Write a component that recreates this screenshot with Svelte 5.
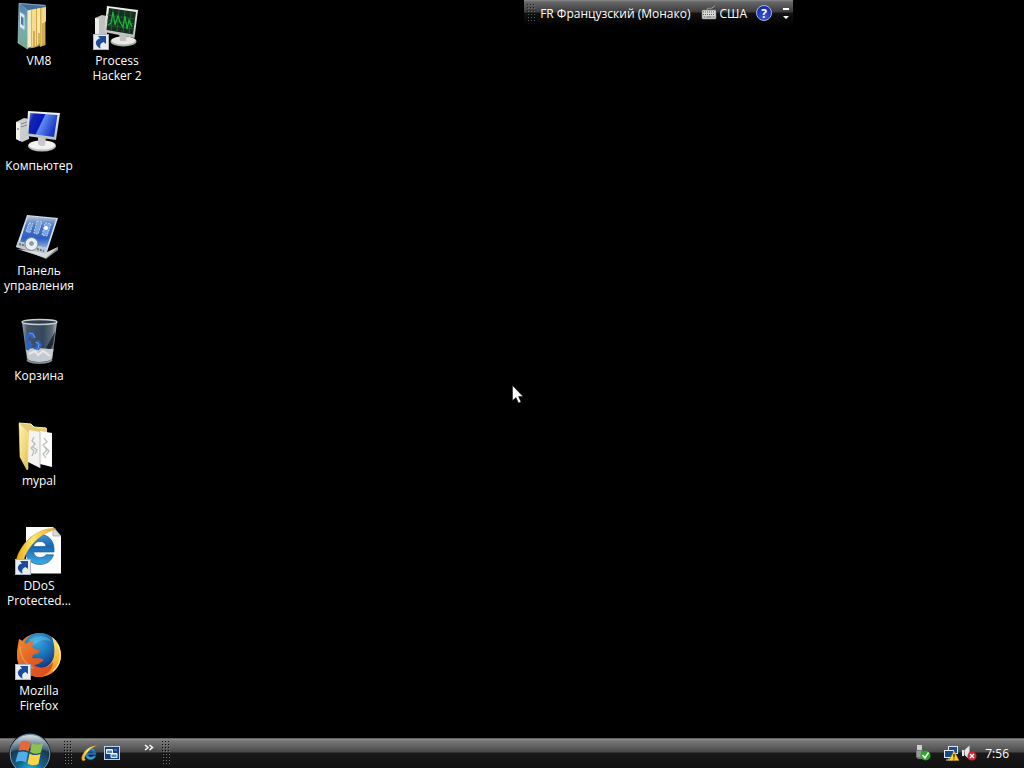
<script>
  const shortcuts = [
    { icon: 'binder', label: 'VM8' },
    { icon: 'computer', label: 'Компьютер' },
    { icon: 'control', label: 'Панель управления' },
    { icon: 'bin', label: 'Корзина' },
    { icon: 'folder', label: 'mypal' },
    { icon: 'page', label: 'DDoS Protected...', link: true },
    { icon: 'firefox', label: 'Mozilla Firefox', link: true },
    { icon: 'hacker', label: 'Process Hacker 2', link: true }
  ];
</script>

<svg class="defs" aria-hidden="true">
  <defs>
    <linearGradient id="g-screen" x1="0" y1="0" x2="1" y2=".4">
      <stop offset="0" stop-color="#6f95ec" /><stop offset=".2" stop-color="#1226b4" /><stop offset=".5" stop-color="#0718b8" /><stop offset=".54" stop-color="#5c8cf0" /><stop offset="1" stop-color="#1a35c8" />
    </linearGradient>
    <linearGradient id="g-metal" x1="0" y1="0" x2="0" y2="1">
      <stop offset="0" stop-color="#f4f4f2" /><stop offset="1" stop-color="#b9bdbb" />
    </linearGradient>
    <linearGradient id="g-binder" x1="0" y1="0" x2="0" y2="1">
      <stop offset="0" stop-color="#4d7fb0" /><stop offset=".5" stop-color="#78adb8" /><stop offset="1" stop-color="#72aa8a" />
    </linearGradient>
    <linearGradient id="g-panel" x1="0" y1="0" x2="0" y2="1">
      <stop offset="0" stop-color="#b9c6dc" /><stop offset=".3" stop-color="#4f78c0" /><stop offset=".7" stop-color="#2c5fc0" /><stop offset="1" stop-color="#8eb0e6" />
    </linearGradient>
    <linearGradient id="g-glass" x1="0" y1="0" x2="1" y2="0">
      <stop offset="0" stop-color="#9ca8b2" /><stop offset=".15" stop-color="#43566a" /><stop offset=".6" stop-color="#34465a" /><stop offset=".86" stop-color="#5d6b77" /><stop offset="1" stop-color="#b3babf" />
    </linearGradient>
    <linearGradient id="g-flap" x1="0" y1="0" x2="1" y2="1">
      <stop offset="0" stop-color="#fff4b4" /><stop offset=".6" stop-color="#f0d878" /><stop offset="1" stop-color="#d9b850" />
    </linearGradient>
    <linearGradient id="g-ie" x1="0" y1="0" x2="0" y2="1">
      <stop offset="0" stop-color="#3d94d6" /><stop offset=".4" stop-color="#1766b0" /><stop offset="1" stop-color="#3aaee8" />
    </linearGradient>
    <linearGradient id="g-ring" x1="0" y1="0" x2="1" y2="0">
      <stop offset="0" stop-color="#e2a818" /><stop offset=".4" stop-color="#ffe768" /><stop offset="1" stop-color="#e9a52c" />
    </linearGradient>
    <linearGradient id="g-fox" x1="0" y1="0" x2="1" y2="1">
      <stop offset="0" stop-color="#f08a34" /><stop offset=".5" stop-color="#e05e22" /><stop offset="1" stop-color="#d9481c" />
    </linearGradient>
    <linearGradient id="g-tail" x1="0" y1="0" x2="0" y2="1">
      <stop offset="0" stop-color="#ffe874" /><stop offset=".6" stop-color="#fbb433" /><stop offset="1" stop-color="#ee7d22" />
    </linearGradient>
    <radialGradient id="g-globe" cx=".4" cy=".25" r=".75">
      <stop offset="0" stop-color="#3aa9de" /><stop offset=".55" stop-color="#1a72b8" /><stop offset="1" stop-color="#123a84" />
    </radialGradient>
    <radialGradient id="g-orb" cx=".5" cy=".95" r=".85">
      <stop offset="0" stop-color="#25c6e8" /><stop offset=".4" stop-color="#14628c" /><stop offset=".8" stop-color="#18354c" /><stop offset="1" stop-color="#51697a" />
    </radialGradient>
    <linearGradient id="g-shine" x1="0" y1="0" x2="0" y2="1">
      <stop offset="0" stop-color="#e4edf2" stop-opacity=".9" /><stop offset="1" stop-color="#8ba4b2" stop-opacity=".25" />
    </linearGradient>
    <pattern id="p-grip" width="3" height="3" patternUnits="userSpaceOnUse">
      <rect width="1" height="1" fill="#080808" /><rect x="1" y="1" width="1" height="1" fill="#777" />
    </pattern>
  </defs>
</svg>

{#snippet explorer()}
  <path fill="url(#g-ie)" stroke="#0f4f92" stroke-width=".6" fill-rule="evenodd" d="M39 24H18.500C19 27.500 21.500 29.500 25 29.500C28 29.500 29.800 28.500 31 26.800H38.500C36.500 33 31.500 36.500 25 36.500C16.500 36.500 10 30.500 10 21.500C10 13 16.500 6.500 25 6.500C34 6.500 40 13.500 39 24ZM18.500 18.500H31C30.500 15 28.500 13.500 25 13.500C21.500 13.500 19.200 15 18.500 18.500Z" />
  <path fill="url(#g-ring)" stroke="#c88f18" stroke-width=".4" d="M41 1C31 -1 19 5 10 15C3 24 -1 33 3 38C5 40.500 9 39 12 36.500C9 36 8 32 11 26C15 18 23 9 32 4.500C36 3 38 2 41 1Z" />
{/snippet}

<main class="desktop">
  <section class="langbar" aria-label="Языковая панель">
    <svg class="lang-grip" viewBox="0 0 9 18" aria-hidden="true"><rect width="9" height="18" fill="url(#p-grip)" opacity=".7" /></svg>
    <button class="language">FR Французский (Монако)</button>
    <button class="layout">
      <svg class="keyboard" viewBox="0 0 16 16" aria-hidden="true">
        <path d="M6 5C6 2 9 4 11 3S13 1 14 1" fill="none" stroke="#aaa" />
        <rect x="1" y="5" width="14" height="9" rx="1" fill="#dcdcdc" stroke="#777" stroke-width=".6" />
        <path d="M2 7h12M2 9.500h12" stroke="#555" stroke-dasharray="1 1" /><path d="M2.500 12h2M5.500 12h5M11.500 12h2" stroke="#555" />
      </svg>
      <span>США</span>
    </button>
    <button class="help" aria-label="Справка">?</button>
    <button class="options" aria-label="Параметры">
      <svg viewBox="0 0 8 12" aria-hidden="true"><path d="M1 0h6v2H1zM1 8h6l-3 3z" fill="#fff" /></svg>
    </button>
  </section>

  <nav class="icons" aria-label="Рабочий стол">
    {#each shortcuts as item}
      <button class="shortcut">
        <svg class="picture" viewBox="0 0 48 48" aria-hidden="true">
          {#if item.icon === 'binder'}
            <path d="M4 0L31 2V42L12 46Z" fill="#39566f" />
            <path d="M12 8L16 6V44L12 45Z" fill="#f4ecc0" />
            <path d="M16 6L21 5V44L16 45Z" fill="#d8b75a" /><path d="M17 7L21 5.500V42L17 44Z" fill="#f6dc8e" />
            <path d="M21 4L25 3V42L21 44Z" fill="#cda546" /><path d="M22 5L25 4V40L22 42Z" fill="#fbe7a2" />
            <path d="M25 3L30 2V42L25 44Z" fill="#d7b14f" /><path d="M26.500 5L31 3V18L29 20V40L26.500 42Z" fill="#f5d987" />
            <path d="M19 28V45M24 30V43M28 20V42" stroke="#a47e2d" />
            <path d="M4 0L12.500 7V46L3 40Z" fill="url(#g-binder)" stroke="#b6d3d8" stroke-width=".6" />
            <path d="M4 0L31 2L31 4L13 7Z" fill="#416d96" /><path d="M4 .5L30 2.500" stroke="#91b3c8" stroke-width=".8" />
            <path d="M5 9L9.500 12V27L5 24Z" fill="#dce9ee" /><path d="M6 13L8.500 15V23L6 21Z" fill="#477db2" />
          {:else if item.icon === 'computer'}
            <path d="M1 14L9 10L14 11V31L7 34L1 31Z" fill="#cbcecc" /><path d="M1 14L5 15V33L1 31Z" fill="#f2f2ef" />
            <path d="M6 16L12 14M6 19L12 17" stroke="#888" /><circle cx="3" cy="21" r="1" fill="#8a918b" />
            <ellipse cx="27" cy="38" rx="14" ry="5.500" fill="#b9bdba" /><ellipse cx="27" cy="37" rx="13" ry="4.500" fill="#f2f2f0" />
            <path d="M23 29H31L30 37C28 39 24 38 23 36Z" fill="#c7cac8" />
            <path d="M13 3L45 5L41 32L11.500 28Z" fill="url(#g-metal)" /><path d="M15 5L42.500 7L39 29L13.500 25.500Z" fill="url(#g-screen)" />
          {:else if item.icon === 'control'}
            <path d="M1 34L31 41L43 34V37L31 46Z" fill="#898e90" /><path d="M30 40L43 34L31 45L2 36Z" fill="#d7dadb" />
            <path d="M12 2L43 5L31 42L1 34Z" fill="#d7e0ea" /><path d="M13 3L41 6L31.500 35L5 29Z" fill="url(#g-panel)" />
            <path d="M14 10l4 .5-3 9-4-1zM22 8l5 1-4 12-4-1zM30 10l6 1-4 12-5-1z" fill="#7ca2df" stroke="#c0d3ee" stroke-width="1" stroke-dasharray="2 1" />
            <circle cx="31" cy="15" r="2" fill="#fff" />
            <path d="M3 28L32 35L31 41L1 34Z" fill="#bfc9d0" /><path d="M4 31l7 2M22 36l7 2" stroke="#68737c" stroke-width="2" stroke-dasharray="2 1" />
            <circle cx="16.500" cy="31" r="6.500" fill="#e9edef" stroke="#79848e" /><circle cx="16.500" cy="30.500" r="3" fill="#8ba0b4" stroke="#fff" />
          {:else if item.icon === 'bin'}
            <path d="M7 4H42L37 43C33 47 15 47 12 43Z" fill="url(#g-glass)" />
            <path d="M31 30L40 14L38 27L32 36Z" fill="#101a25" opacity=".8" />
            <path d="M11 32C18 28 30 31 38.500 31L37 41C32 45 17 45 12.500 41Z" fill="#c4cacf" /><path d="M14 36L20 33L23 37L28 33L35 38" fill="none" stroke="#e6e9eb" stroke-width="2" />
            <path d="M13 15l5-1 3 5-3 2-3-3-3 4-2-4zM20 24l4-2 3 5-3 5-6-1 3-3zM10 24l5-2 3 6-4 3zM17 28l-4 5-2-4" fill="#2f62c3" /><path d="M14 15l4 1 2 4M21 24l3 2-1 5" fill="none" stroke="#719ce4" />
            <ellipse cx="24.500" cy="4" rx="17.500" ry="2.500" fill="#303d49" stroke="#c7d0d5" stroke-width="1.300" />
            <path d="M12 42C17 46 32 46 37 42" fill="none" stroke="#8c969e" stroke-width="1.500" />
          {:else if item.icon === 'folder'}
            <path d="M4 0L16 1L19 4L32 5V16L12 40Z" fill="#e5cb75" /><path d="M4 0L16 1L19 4L31 5" fill="none" stroke="#fff0a5" />
            <path d="M14 7L25 9V45L13 39Z" fill="#f5f3f2" /><path d="M25 8L37 10V44L25 41Z" fill="#fcfcfc" /><path d="M25 9V45" stroke="#c0bdb9" />
            <path d="M19 14l-2 4 3 3-4 4 3 3-2 5M29 15l3 4-4 3 4 5-4 4 3 4M18 24l4 3-2 4M30 24l4 4-3 4" fill="none" stroke="#b3bbb8" stroke-width="1.200" />
            <path d="M4 0L13 10V46L12 47L5 34Z" fill="url(#g-flap)" stroke="#fff0aa" stroke-width=".5" />
          {:else if item.icon === 'page'}
            <path d="M11 -1H38L46 8V45.500H11Z" fill="#fcfcfc" /><path d="M38 -1L46 8H38Z" fill="#dadada" stroke="#929292" stroke-width=".6" />
            {@render explorer()}
          {:else if item.icon === 'firefox'}
            <circle cx="24" cy="22" r="22" fill="#e8742a" /><circle cx="25" cy="17.500" r="17.500" fill="url(#g-globe)" />
            <path d="M14 7C22 1 32 2 37 9C31 5 23 7 18 13Z" fill="#7fcdec" opacity=".35" />
            <path d="M37 4C47 11 49 27 41 36C34 45 21 46 11 40C9 37 11 34 15 33C25 39 37 34 39 23C40 16 39 10 37 4Z" fill="url(#g-tail)" />
            <path d="M43 12C47 23 45 32 38 38" fill="none" stroke="#fff0a0" stroke-width="1.200" />
            <path d="M4 6C7 7 9 9 11 11C13 9 16 8 19 8C17 10 17 12 18 15L25 18C24 20 21 21 18 22L17 25C20 26 25 24 29 27C26 29 23 32 19 32C25 36 33 36 38 29C38 37 31 43 24 44C12 44 2 35 2 23C2 16 3 12 4 6Z" fill="url(#g-fox)" />
            <path d="M5 13C5 23 9 30 18 35" fill="none" stroke="#f9ae4c" stroke-width="1.500" opacity=".55" />
          {:else}
            <path d="M2 15L9 12L14 13V31L8 33L2 31Z" fill="#bfc2bf" /><path d="M2 15L6 16V32L2 31Z" fill="#edeeeb" />
            <ellipse cx="30.500" cy="38.500" rx="13" ry="5" fill="#a9aca9" /><ellipse cx="30.500" cy="37.500" rx="12" ry="4" fill="#e8e9e7" />
            <path d="M26 30H34L33 38H27Z" fill="#bfc2c0" /><path d="M14 3L45 7L41.500 35L11 29Z" fill="url(#g-metal)" />
            <path d="M16 5L43 9L40 31.500L13.500 27Z" fill="#16301e" />
            <path d="M14 12L42 16M14 17L42 21M14 22L41 26M20 6L18 28M26 7L24 29M32 8L30 30M38 9L36 31" stroke="#2c6540" stroke-width=".8" />
            <path d="M15 22L18 20L20 9L22 22L25 13L27 19L30 24L32 13L34 26L36 17L39 24" fill="none" stroke="#19b83a" stroke-width="1.200" />
          {/if}
          {#if item.link}
            <rect x=".5" y="31.500" width="15" height="15" fill="#e9edf2" stroke="#adb4bd" />
            <path d="M7 45.500C1 42 2 36.500 7 35.500L5 33H13V41L10.500 39C7.500 40 6.500 42 7.500 45.500Z" fill="#1c4b9b" />
          {/if}
        </svg>
        <span class="label">{item.label}</span>
      </button>
    {/each}
  </nav>

  <svg class="pointer" viewBox="0 0 12 19" aria-hidden="true"><path d="M.5 .5V15.500L4 12.500L6.500 18L9 17L6.500 11.500H11Z" fill="#fff" stroke="#111" stroke-width=".5" /></svg>

  <footer class="taskbar">
    <button class="start" aria-label="Пуск">
      <svg viewBox="0 0 44 44" aria-hidden="true">
        <circle cx="22" cy="22" r="21" fill="#0a151d" /><circle cx="22" cy="22" r="19.800" fill="url(#g-orb)" stroke="#8198a8" stroke-width="1" />
        <path d="M3 20C4 9 12 3 22 3S40 9 41 20C31 15 13 15 3 20Z" fill="url(#g-shine)" />
        <path d="M13 9.500C16 8 19.500 8.500 22.500 10.500L20.500 19.500C17.500 17.500 14 17.500 10.500 19Z" fill="#e8663a" />
        <path d="M24 11C27.500 13 31 13 35 11L33 20.500C29 22.500 25.500 22 22 20Z" fill="#8ec050" />
        <path d="M10 20.500C13.500 19 17 19 20 21L18 30.500C15 28.500 11.500 28.500 7.500 30Z" fill="#52aee8" />
        <path d="M21.500 21.500C25.500 23.500 28.500 23.500 32.500 22L30.500 32C26.500 34 23 33.500 19.500 31.500Z" fill="#fbd448" />
      </svg>
    </button>
    <svg class="grip" viewBox="0 0 9 24" aria-hidden="true"><rect width="9" height="24" fill="url(#p-grip)" /></svg>
    <div class="quick">
      <button aria-label="Internet Explorer"><svg class="small" viewBox="0 -1 41 41" aria-hidden="true">{@render explorer()}</svg></button>
      <button aria-label="Свернуть все окна">
        <svg class="small" viewBox="0 0 16 16" aria-hidden="true"><rect x=".5" y="1.500" width="15" height="13" fill="#163f7b" stroke="#c1d2e6" /><path d="M2.500 4.500h6v4h-6zM7 8.500h6v4H7z" fill="#5289bf" stroke="#f1f5fa" /><path d="M3 5h5M7 9h6" stroke="#fff" /><path d="M10 5h3" stroke="#86abd3" /></svg>
      </button>
    </div>
    <button class="more" aria-label="Ещё"><svg viewBox="0 0 10 8" aria-hidden="true"><path d="M1 1l3 2.500L1 6M5.500 1l3 2.500L5.500 6" fill="none" stroke="#fff" stroke-width="1.500" /></svg></button>
    <svg class="grip" viewBox="0 0 9 24" aria-hidden="true"><rect width="9" height="24" fill="url(#p-grip)" /></svg>
    <div class="tray">
      <button class="device" aria-label="Безопасное извлечение устройства"><svg class="small" viewBox="0 0 16 16" aria-hidden="true"><rect x="2" width="5" height="5" fill="#cfcfcf" /><path d="M1 5h7v9H3l-2-2z" fill="#777" /><path d="M2 6h4v6H2z" fill="#999" /><circle cx="10.500" cy="10.500" r="5" fill="#2fa32b" /><path d="M7.500 10l2.500 3 3.500-5.500" fill="none" stroke="#fff" stroke-width="1.500" /></svg></button>
      <button aria-label="Сеть"><svg class="small" viewBox="0 0 16 16" aria-hidden="true"><rect x="5.500" y="1.500" width="9" height="7" fill="#1d4b8e" stroke="#dce6ee" /><rect x="1.500" y="5.500" width="9" height="7" fill="#164987" stroke="#e5edf3" /><path d="M3 15h6M6 12v3" stroke="#d6dfe6" /><path d="M11 6L16 15.500H6Z" fill="#ffd52c" stroke="#bd850c" stroke-width=".6" /><path d="M11 9v3.500M11 13.500v1" stroke="#382700" stroke-width="1.300" /></svg></button>
      <button aria-label="Громкость"><svg class="small" viewBox="0 0 16 16" aria-hidden="true"><path d="M1 5h2v6H1zM3.500 5l5-4.500v14l-5-4.500z" fill="#e5e7e8" /><circle cx="11" cy="11" r="4.500" fill="#d22730" /><path d="M9 9l4 4M13 9l-4 4" stroke="#fff" stroke-width="1.500" /></svg></button>
      <time>7:56</time>
    </div>
  </footer>
</main>

<style>
  :global(body) { margin: 0; background: #000; }
  .defs { position: absolute; width: 0; height: 0; }
  .desktop { position: relative; display: flex; flex-direction: column; height: 100vh; overflow: hidden; background: #000; color: #fff; font: 12px/15px "Open Sans", "Noto Sans", sans-serif; }
  button { display: flex; align-items: center; margin: 0; padding: 0; border: 0; background: none; color: inherit; font: inherit; }
  svg { display: block; flex: none; }

  .icons { flex: 1; display: grid; grid-auto-flow: column; grid-template-rows: repeat(7, 105px); grid-auto-columns: 78px; justify-content: start; min-height: 0; }
  .shortcut { flex-direction: column; gap: 2px; padding: 3px 4px 0; }
  .picture { width: 48px; height: 48px; overflow: visible; }
  .label { text-align: center; }

  .langbar { position: absolute; top: 0; right: 231px; display: flex; align-items: center; height: 26px; padding: 0 3px; background: linear-gradient(#8a8a8a 0, #666 2px, #3c3c3c 12px, #131313 13px, #000 26px); }
  .lang-grip { width: 9px; height: 18px; margin-right: 4px; }
  .layout { gap: 2px; margin: 0 9px 0 11px; }
  .keyboard { width: 16px; height: 16px; }
  .help { justify-content: center; width: 16px; height: 16px; border: 1px solid #a9b6e8; border-radius: 50%; background: radial-gradient(circle at 50% 80%, #3656d8, #10209a); font-weight: 700; }
  .options { margin: 2px 0 0 10px; }
  .options svg { width: 8px; height: 12px; }

  .pointer { position: absolute; left: 50%; top: 385px; width: 12px; height: 19px; }

  .taskbar { display: flex; align-items: center; height: 30px; background: linear-gradient(#3a3a3a 0, #8c8c8c 1px, #777 3px, #494949 14px, #191919 15px, #111 30px); }
  .start { align-self: flex-start; width: 44px; height: 44px; margin: -6px 12px 0 8px; position: relative; }
  .start svg { width: 44px; height: 44px; }
  .grip { width: 9px; height: 24px; }
  .quick { display: flex; gap: 7px; margin-left: 8px; }
  .small { width: 16px; height: 16px; }
  .more { align-self: flex-start; margin: 6px 8px 0 24px; }
  .more svg { width: 10px; height: 8px; }
  .tray { display: flex; align-items: center; gap: 2px; margin-left: auto; padding-right: 15px; }
  .device { margin-right: 10px; }
  time { margin-left: 6px; }
</style>
